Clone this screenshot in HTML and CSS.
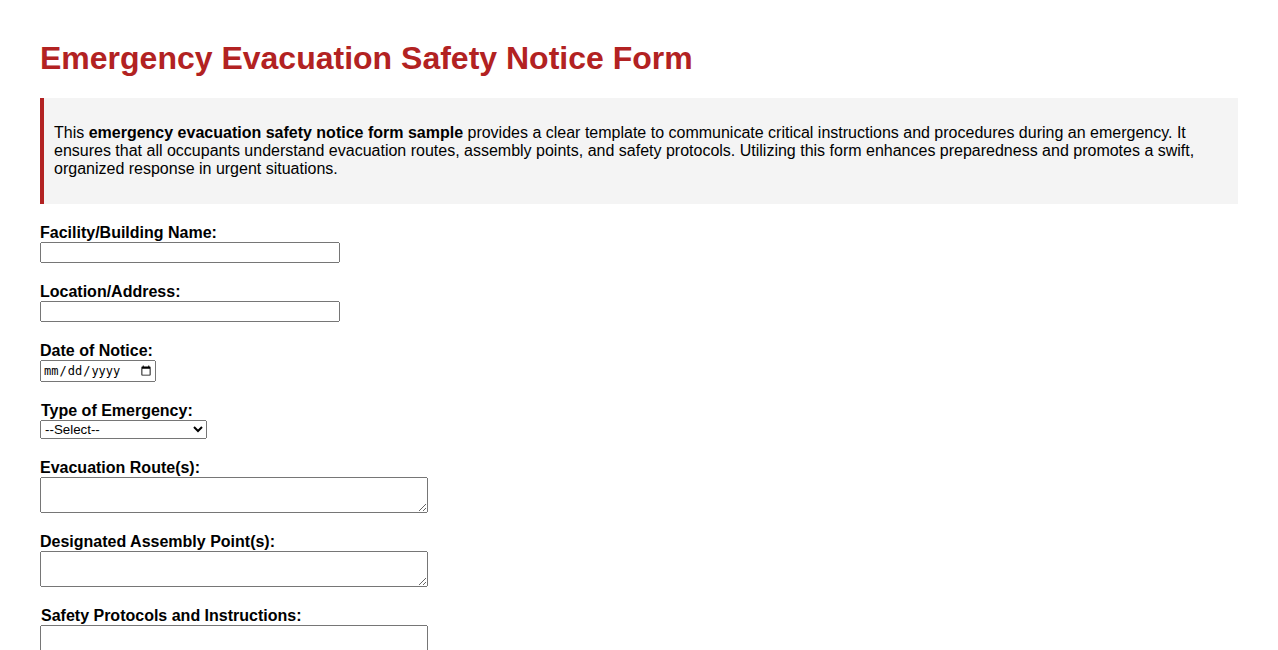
FILE: index.html
```html
<!DOCTYPE html>
<html lang="en">
<head>
<meta charset="utf-8">
<title>Emergency Evacuation Safety Notice Form</title>
<link rel="stylesheet" href="styles.css">
</head>
<body>
<h1 class="title">Emergency Evacuation Safety Notice Form</h1>
<div class="notice">
  <p>This <strong>emergency evacuation safety notice form sample</strong> provides a clear template to communicate critical instructions and procedures during an emergency. It ensures that all occupants understand evacuation routes, assembly points, and safety protocols. Utilizing this form enhances preparedness and promotes a swift, organized response in urgent situations.</p>
</div>
<form class="form">
  <div class="field">
    <label class="label" for="facility">Facility/Building Name:</label>
    <input class="text" type="text" id="facility">
  </div>
  <div class="field">
    <label class="label" for="location">Location/Address:</label>
    <input class="text" type="text" id="location">
  </div>
  <div class="field">
    <label class="label" for="date">Date of Notice:</label>
    <input class="date" type="date" id="date">
  </div>
  <div class="field">
    <label class="label shifted" for="type">Type of Emergency:</label>
    <select class="select" id="type">
      <option>--Select--</option>
      <option>Fire</option>
      <option>Earthquake</option>
      <option>Flood</option>
      <option>Chemical Spill</option>
      <option>Other</option>
    </select>
  </div>
  <div class="field">
    <label class="label" for="routes">Evacuation Route(s):</label>
    <textarea class="area" id="routes"></textarea>
  </div>
  <div class="field">
    <label class="label" for="assembly">Designated Assembly Point(s):</label>
    <textarea class="area" id="assembly"></textarea>
  </div>
  <div class="field">
    <label class="label shifted" for="protocols">Safety Protocols and Instructions:</label>
    <textarea class="area" id="protocols"></textarea>
  </div>
</form>
</body>
</html>
```
FILE: styles.css
```css
body {
  margin: 0;
  padding: 40px 40px 40px;
  font-family: "Liberation Sans", Arial, sans-serif;
  font-size: 16px;
  color: #000;
  background: #fff;
}
.title {
  color: #b22222;
  font-size: 32px;
  margin: 0 0 21px;
}
.notice {
  background: #f4f4f4;
  border-left: 4px solid #b22222;
  padding: 10px;
  margin-bottom: 20px;
}
.notice p {
  margin: 16px 0;
}
.form {
  display: flex;
  flex-direction: column;
}
.field {
  display: flex;
  flex-direction: column;
  align-items: flex-start;
  margin-bottom: 20px;
}
.label {
  font-weight: bold;
  line-height: 18px;
}
.shifted {
  margin-left: 1px;
}
.text {
  width: 300px;
  height: 21px;
  box-sizing: border-box;
  margin: 0;
}
.date {
  width: 116px;
  height: 22px;
  box-sizing: border-box;
  font-size: 12px;
  margin: 0;
}
.select {
  width: 167px;
  margin: 0;
}
.area {
  width: 388px;
  height: 36px;
  box-sizing: border-box;
  margin: 0;
}
```
